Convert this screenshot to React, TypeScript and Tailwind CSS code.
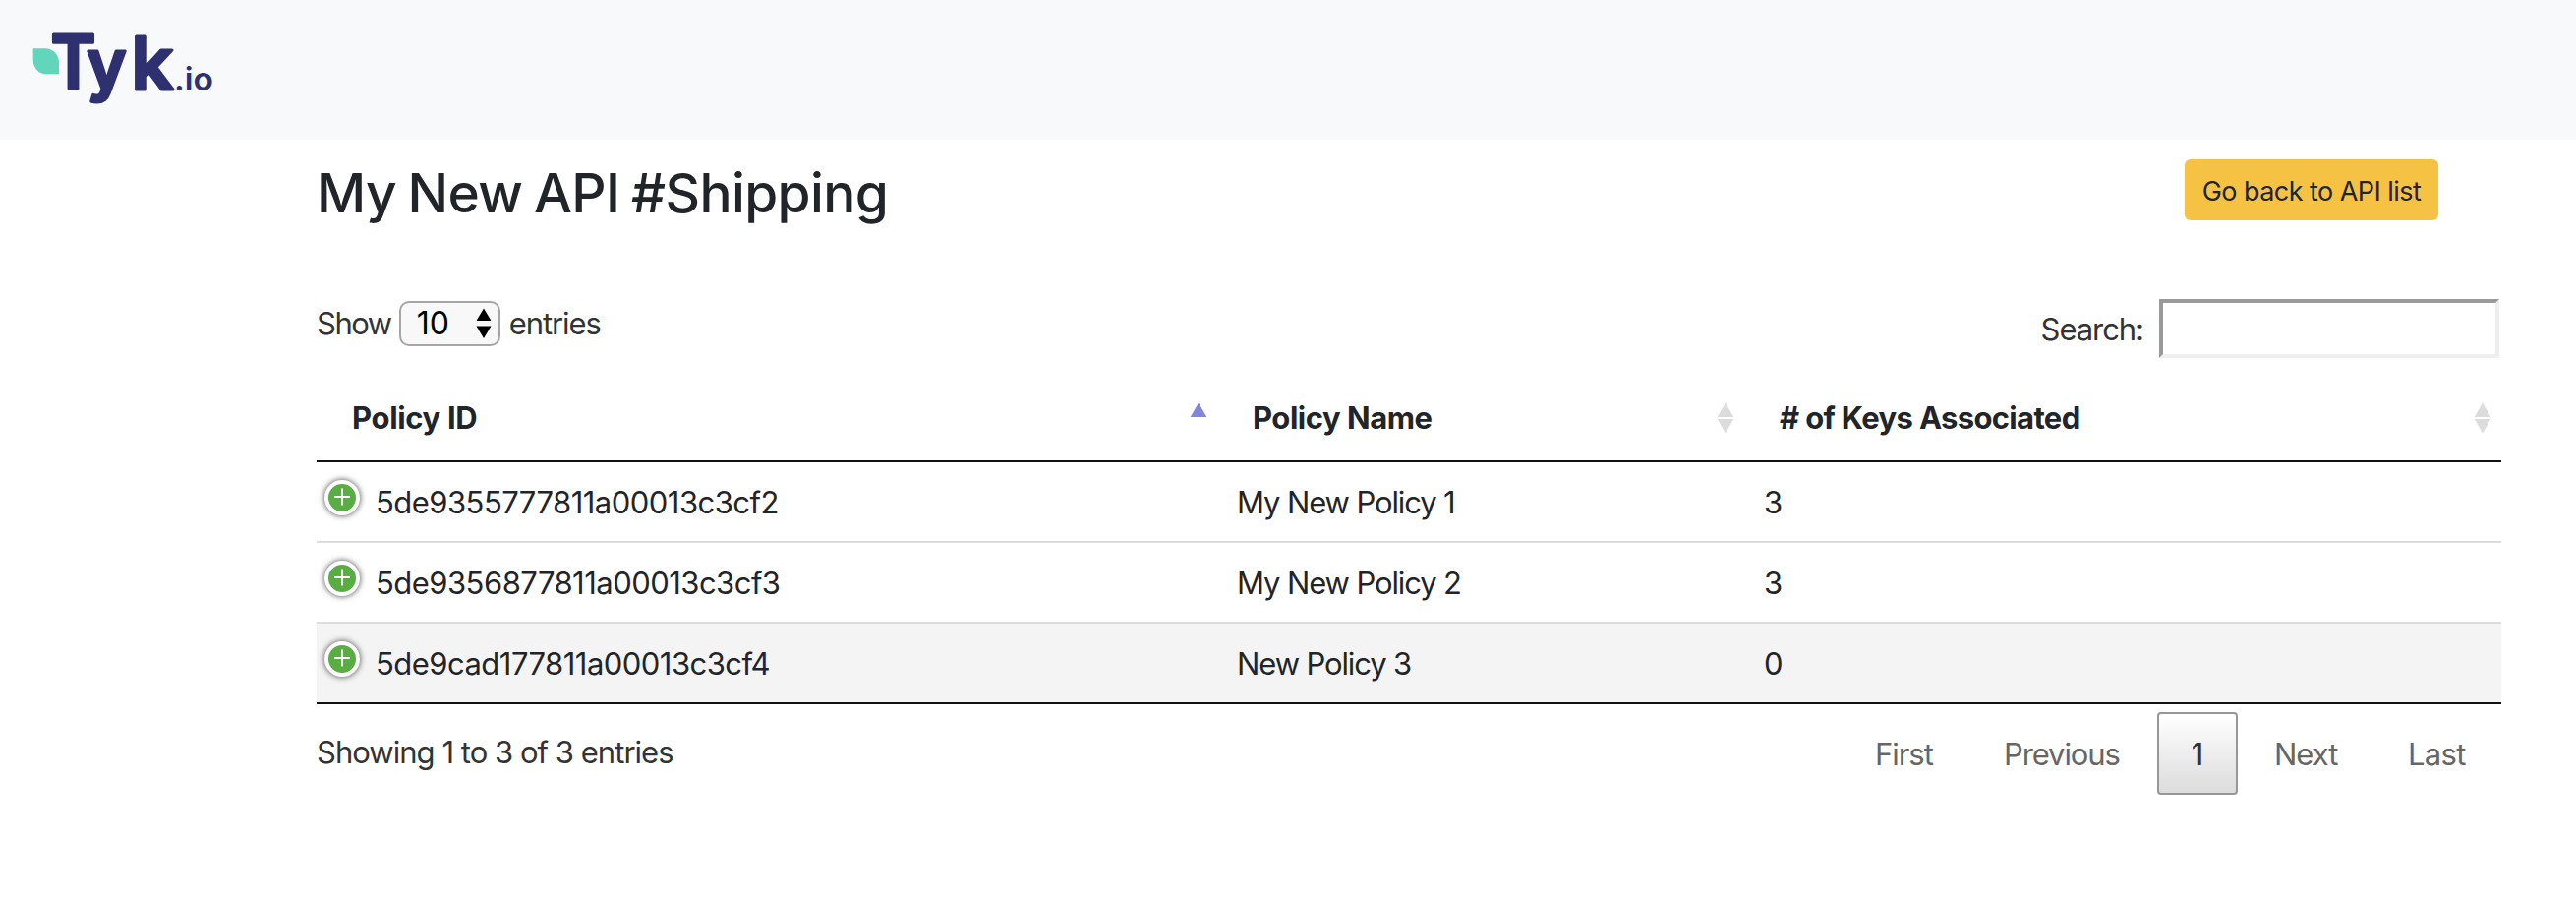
import React from "react";

type Policy = { id: string; name: string; keys: number; shaded?: boolean };

const policies: Policy[] = [
  { id: "5de9355777811a00013c3cf2", name: "My New Policy 1", keys: 3 },
  { id: "5de9356877811a00013c3cf3", name: "My New Policy 2", keys: 3 },
  { id: "5de9cad177811a00013c3cf4", name: "New Policy 3", keys: 0, shaded: true },
];

function Logo() {
  return (
    <svg width="240" height="142" viewBox="0 0 240 142" role="img" aria-label="Tyk.io">
      <path d="M33.7 49.3H46C54 49.3 60 56 60 64V75.3H47C39.5 75.3 33.7 69 33.7 61Z" fill="#62d6bb" />
      <g
        fill="#2e3070"
        stroke="#2e3070"
        strokeWidth="3"
        strokeLinejoin="round"
        className="font-['Inter',sans-serif] font-semibold"
      >
        <text x="51.5" y="89.5" fontSize="75" textLength="46" lengthAdjust="spacingAndGlyphs">T</text>
        <text x="88.5" y="89.5" fontSize="69" textLength="40" lengthAdjust="spacingAndGlyphs">y</text>
        <text x="133.5" y="90.5" fontSize="74" textLength="43" lengthAdjust="spacingAndGlyphs">k</text>
      </g>
      <text
        x="177"
        y="91.5"
        fontSize="33"
        fill="#2e3070"
        textLength="40"
        lengthAdjust="spacingAndGlyphs"
        className="font-['Inter',sans-serif] font-semibold"
      >
        .io
      </text>
    </svg>
  );
}

function SortIcon({ active = false }: { active?: boolean }) {
  return (
    <svg width="18" height="32" viewBox="0 0 18 32" aria-hidden="true">
      <path d="M9 0.5L17.3 15H0.7Z" fill={active ? "#7f86dc" : "#dcdcdc"} />
      {!active && <path d="M0.7 17H17.3L9 31.5Z" fill="#dcdcdc" />}
    </svg>
  );
}

function ExpandIcon() {
  return (
    <span className="mt-px flex size-9 shrink-0 items-center justify-center rounded-full border-4 border-white bg-[#5aad45] shadow-[0_0_6px_#444]">
      <svg width="16" height="18" viewBox="0 0 16 18" aria-hidden="true" className="-translate-y-px">
        <path d="M8 0.5V17.5M0.2 9H15.8" stroke="#fff" strokeWidth="1.9" fill="none" />
      </svg>
    </span>
  );
}

export default function App() {
  return (
    <div className="min-h-[916px] w-[2620px] bg-white font-['Inter','Liberation_Sans',sans-serif] text-[31px] leading-[48px] text-[#212529]">
      <nav className="flex h-[142px] items-start bg-[#f8f9fb]">
        <Logo />
      </nav>

      <main className="ml-[322px] w-[2222px]">
        <header className="flex items-start justify-between pt-5 pr-16">
          <h1 className="pb-px text-[55px] leading-[68px] font-medium tracking-[-0.6px] [word-spacing:-2.5px]">
            My New API #Shipping
          </h1>
          <button className="flex h-[62px] w-[258px] items-center justify-center rounded-[6px] bg-[#f5c244] pt-[3px] text-[27px] leading-[42px] tracking-[-0.55px]">
            Go back to API list
          </button>
        </header>

        <div className="mt-[73px] flex h-[60px] items-start justify-between text-[#333]">
          <label className="flex h-[50px] items-center">
            <span className="tracking-[-1.5px]">Show</span>
            <span className="ml-[8px] flex h-[46px] w-[103px] items-center justify-between rounded-[10px] border-2 border-[#a6a6a6] bg-[#f8f8f8] pr-[7px] pl-[16px] text-[32px] leading-[42px] text-black">
              10
              <svg width="16" height="32" viewBox="0 0 16 32" aria-hidden="true">
                <path d="M8 0.5L15.5 13H0.5ZM0.5 18.5H15.5L8 31Z" fill="#000" />
              </svg>
            </span>
            <span className="ml-[9px] tracking-[-1.05px]">entries</span>
          </label>
          <label className="flex h-[60px] items-center pr-[2px]">
            <span className="pt-[2px] tracking-[-1.05px]">Search:</span>
            <input
              type="text"
              className="ml-[16px] h-[60px] w-[346px] border-4 border-t-[#999b9b] border-r-[#eee] border-b-[#eee] border-l-[#999b9b] bg-white outline-none"
            />
          </label>
        </div>

        <section className="mt-[18px] border-b-2 border-[#111]">
          <div className="grid h-[88px] grid-cols-[916px_535px_771px] border-b-2 border-[#111] font-bold">
            <div className="flex items-center justify-between pr-[10px] pl-[36px]">
              <span className="tracking-[-0.34px]">Policy ID</span>
              <SortIcon active />
            </div>
            <div className="flex items-center justify-between pr-[9px] pl-[36px]">
              <span className="tracking-[-0.47px]">Policy Name</span>
              <SortIcon />
            </div>
            <div className="flex items-center justify-between pr-[10px] pl-[37px]">
              <span className="tracking-[-0.66px]"># of Keys Associated</span>
              <SortIcon />
            </div>
          </div>
          {policies.map((p, i) => (
            <div
              key={p.id}
              className={
                "grid grid-cols-[916px_535px_771px] items-center " +
                (i > 0 ? "h-[82px] border-t-2 border-[#ddd] " : "h-20 ") +
                (p.shaded ? "bg-[#f4f4f4]" : "")
              }
            >
              <div className="flex items-start pt-[2px] pl-2">
                <ExpandIcon />
                <span className="ml-4 tracking-[-0.53px]">{p.id}</span>
              </div>
              <span className="pt-px pl-[20px] tracking-[-1.12px]">{p.name}</span>
              <span className="pt-px pl-[21px]">{p.keys}</span>
            </div>
          ))}
        </section>

        <footer className="flex items-start justify-between pt-2 text-[#333]">
          <span className="pt-[17px] tracking-[-0.97px]">Showing 1 to 3 of 3 entries</span>
          <div className="flex h-[84px] items-center text-[#666]">
            <span className="w-[131px] pt-[2px] tracking-[-1.05px]">First</span>
            <span className="w-[156px] pt-[2px] tracking-[-1.11px]">Previous</span>
            <span className="flex h-[84px] w-[82px] items-center justify-center rounded-[4px] border-2 border-[#979797] bg-linear-to-b from-white to-[#dcdcdc] pt-[2px] text-[#333]">
              1
            </span>
            <span className="ml-[37px] w-[136px] pt-[2px] tracking-[-1px]">Next</span>
            <span className="w-[95px] pt-[2px] tracking-[-0.7px]">Last</span>
          </div>
        </footer>
      </main>
    </div>
  );
}
